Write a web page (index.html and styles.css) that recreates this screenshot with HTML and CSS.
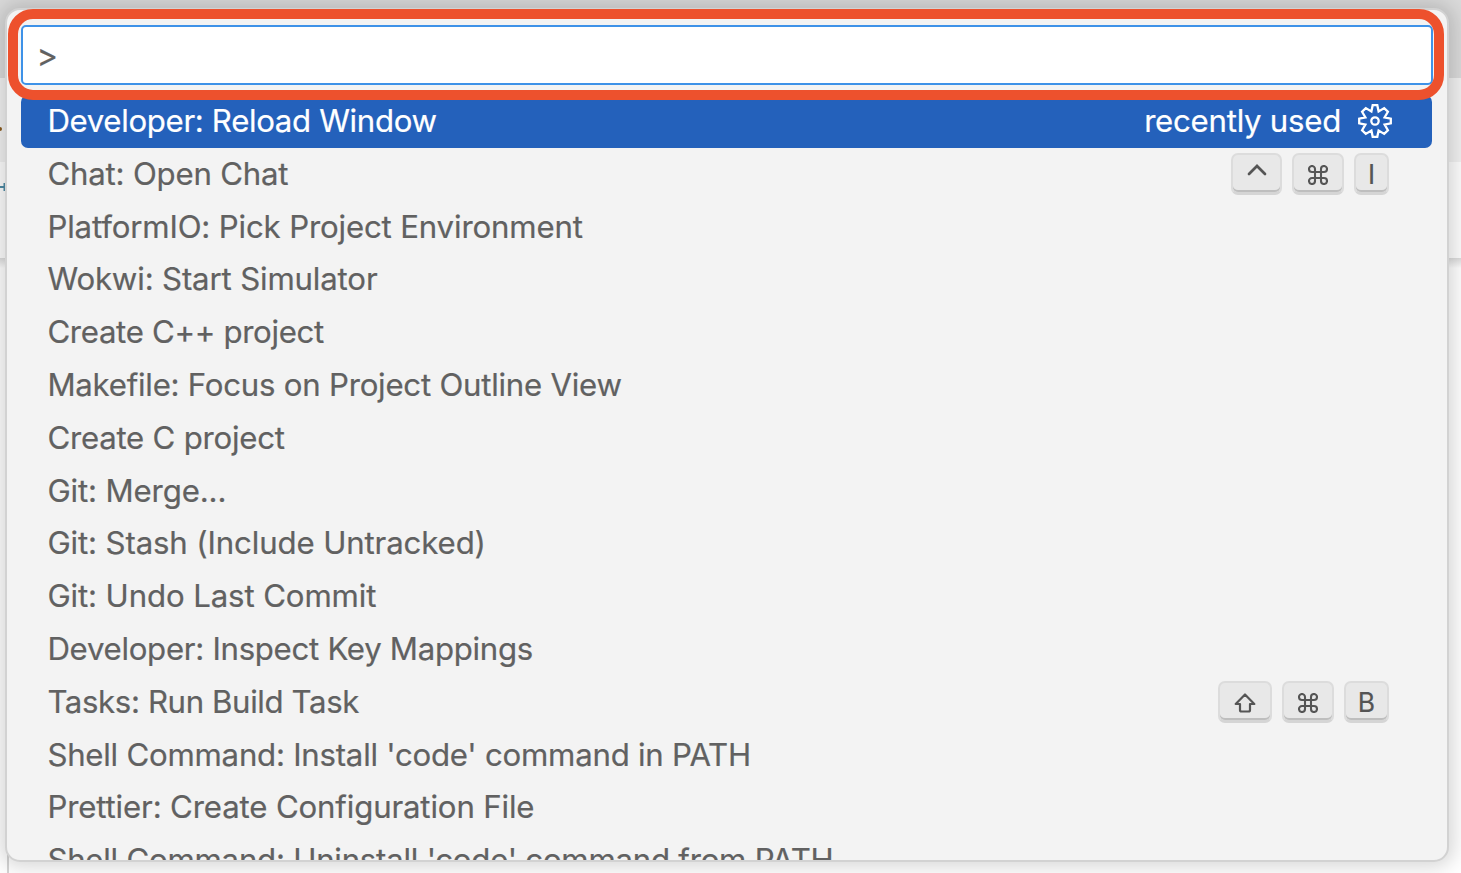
FILE: index.html
```html
<!DOCTYPE html>
<html lang="en">
<head>
<meta charset="utf-8">
<title>Command Palette</title>
<link rel="stylesheet" href="styles.css">
</head>
<body>
<svg class="defs" aria-hidden="true">
  <symbol id="cmd" viewBox="0 0 20 20"><path d="M7 7V4A3 3 0 1 0 4 7H16A3 3 0 1 0 13 4V16A3 3 0 1 0 16 13H4A3 3 0 1 0 7 16Z" fill="none" stroke="currentColor" stroke-width="2.1"/></symbol>
</svg>
<div class="editor">
  <div class="titlebar"></div>
  <div class="tabs"></div>
  <div class="crumbs"></div>
  <div class="code"></div>
  <span class="peek dot"></span>
  <svg class="peek plus" viewBox="0 0 6 10"><path d="M0 5H6M4.5 1V9"/></svg>
  <span class="peek rule"></span>
</div>
<div class="palette">
  <div class="input">&gt;</div>
  <ul class="list">
    <li class="row selected"><span class="label l1">Developer: Reload Window</span><span class="hint">recently used</span>
      <svg class="gear" viewBox="-18 -18 36 36"><path d="M-2.3-15.8H2.3L3.6-9.6 9.2-12.9 12.9-9.2 9.6-3.6 15.8-2.3V2.3L9.6 3.6 12.9 9.2 9.2 12.9 3.6 9.6 2.3 15.8H-2.3L-3.6 9.6-9.2 12.9-12.9 9.2-9.6 3.6-15.8 2.3V-2.3L-9.6-3.6-12.9-9.2-9.2-12.9-3.6-9.6Z"/><circle r="3.7"/></svg></li>
    <li class="row"><span class="label l2">Chat: Open Chat</span>
      <span class="keys"><kbd class="k51"><svg class="caret" viewBox="0 0 20 12"><path d="M2 10 10 2 18 10"/></svg></kbd><kbd class="k52"><svg class="cmd"><use href="#cmd"/></svg></kbd><kbd class="k35">I</kbd></span></li>
    <li class="row"><span class="label l3">PlatformIO: Pick Project Environment</span></li>
    <li class="row"><span class="label l4">Wokwi: Start Simulator</span></li>
    <li class="row"><span class="label l5">Create C++ project</span></li>
    <li class="row"><span class="label l6">Makefile: Focus on Project Outline View</span></li>
    <li class="row"><span class="label l7">Create C project</span></li>
    <li class="row"><span class="label l8">Git: Merge...</span></li>
    <li class="row"><span class="label l9">Git: Stash (Include Untracked)</span></li>
    <li class="row"><span class="label l10">Git: Undo Last Commit</span></li>
    <li class="row"><span class="label l11">Developer: Inspect Key Mappings</span></li>
    <li class="row"><span class="label l12">Tasks: Run Build Task</span>
      <span class="keys"><kbd class="k54"><svg class="shift" viewBox="0 0 22 20"><path d="M11 1.5 20.3 11H16V17Q16 18.5 14.5 18.5H7.5Q6 18.5 6 17V11H1.7Z"/></svg></kbd><kbd class="k52"><svg class="cmd"><use href="#cmd"/></svg></kbd><kbd class="k45">B</kbd></span></li>
    <li class="row"><span class="label l13">Shell Command: Install 'code' command in PATH</span></li>
    <li class="row"><span class="label l14">Prettier: Create Configuration File</span></li>
    <li class="row"><span class="label l15">Shell Command: Uninstall 'code' command from PATH</span></li>
  </ul>
</div>
<div class="highlight"></div>
</body>
</html>
```
FILE: styles.css
```css
* { box-sizing: border-box; }
body { margin: 0; width: 1461px; height: 873px; overflow: hidden; position: relative; font-family: Inter, "Liberation Sans", sans-serif; background: #fff; }
.defs { position: absolute; width: 0; height: 0; }
.editor { height: 873px; display: flex; flex-direction: column; }
.titlebar { height: 78px; background: #dadada; }
.tabs { height: 84px; background: #f1f1f1; }
.crumbs { height: 96px; background: #fdfdfd; }
.code { flex: 1; background: linear-gradient(#dcdcdc, #fff 10px); }
.peek { position: absolute; }
.dot { left: -2px; top: 127px; width: 4px; height: 4px; border-radius: 2px; background: #8a5a1c; }
.plus { left: 0; top: 182px; width: 6px; height: 10px; stroke: #4f8ba5; stroke-width: 2; }
.rule { left: 7px; top: 850px; width: 2px; height: 23px; background: #d4d4d4; }
.palette { position: absolute; left: 5px; top: 8px; width: 1444px; height: 854px; padding: 15px 14px 0; border: 2px solid #d2d2d2; border-radius: 15px; background: #f3f3f3; overflow: hidden; box-shadow: 0 0 19px 5px rgba(0,0,0,.16); color: #616161; -webkit-text-stroke: .2px currentColor; }
.input { height: 60px; width: 1412px; border: 2px solid #3e92e8; border-radius: 5px; background: #fff; padding-left: 13.5px; font-size: 32.5px; line-height: 58px; }
.list { list-style: none; margin: 10px 0 0; padding: 0; width: 1411px; }
.row { height: 52.8px; display: flex; align-items: center; padding: 0 43px 0 26.4px; font-size: 31.2px; line-height: 52.8px; white-space: pre; }
.label { margin-right: auto; }
.l1 { letter-spacing: -.34px; }
.l2 { letter-spacing: -.2px; }
.l3, .l4 { letter-spacing: -.16px; }
.l5 { letter-spacing: -.33px; }
.l6, .l7 { letter-spacing: -.24px; }
.l8, .l9 { letter-spacing: -.13px; }
.l10 { letter-spacing: -.12px; }
.l11 { letter-spacing: -.29px; }
.l12 { letter-spacing: -.38px; }
.l13, .l15 { letter-spacing: -.24px; }
.l14 { letter-spacing: -.15px; }
.selected { background: #2461bb; color: #fff; border-radius: 7px; padding-right: 39px; }
.hint { margin-right: 16px; letter-spacing: -.26px; }
.gear { width: 36px; height: 36px; margin-top: -1px; fill: none; stroke: #fff; stroke-width: 2.3; }
.keys { display: flex; gap: 10px; }
kbd { height: 42px; display: flex; align-items: center; justify-content: center; font: 26.4px/36px Inter, sans-serif; padding-top: 1px; color: #555; background: #e8e8e8; border: 2px solid #dcdcdc; border-bottom: 3px solid #d5d5d5; border-radius: 7px; box-shadow: inset 0 -2px 0 #bebebe; }
.k51 { width: 51px; } .k52 { width: 52px; } .k35 { width: 35px; } .k54 { width: 54px; } .k45 { width: 45px; }
.caret { width: 20px; height: 12px; margin-top: -9px; fill: none; stroke: currentColor; stroke-width: 2.7; stroke-linecap: round; }
.cmd { width: 20px; height: 20px; margin-top: 1px; }
.shift { width: 22px; height: 20px; margin-top: 1px; fill: none; stroke: currentColor; stroke-width: 2.2; stroke-linejoin: round; }
.highlight { position: absolute; left: 8px; top: 9px; width: 1436px; height: 91px; border: 10px solid #ed512d; border-radius: 25px; }
```
